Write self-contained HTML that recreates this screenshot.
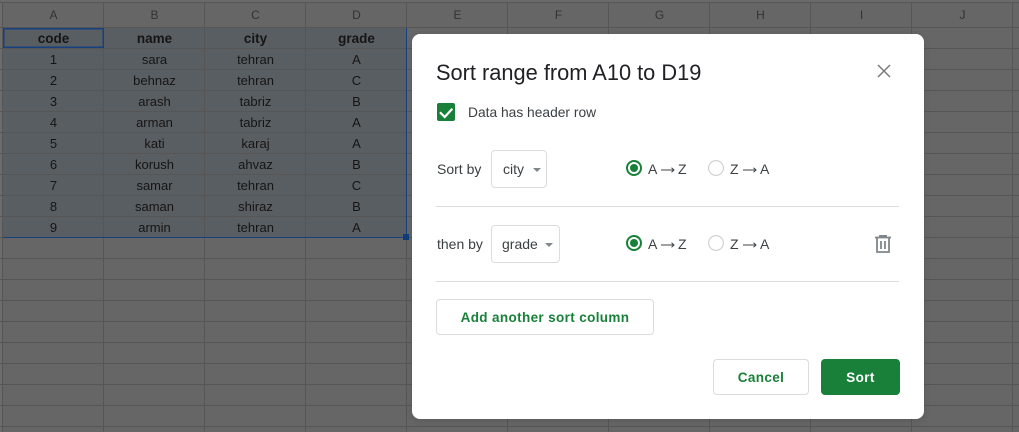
<!DOCTYPE html>
<html><head><meta charset="utf-8"><style>
html,body{margin:0;padding:0}
body{width:1019px;height:432px;overflow:hidden;position:relative;background:#666;font-family:"Liberation Sans",sans-serif}
.a{position:absolute}
.t{position:absolute;white-space:nowrap;line-height:20px}
.c{position:absolute;width:101px;text-align:center;font-size:13px;color:#151515;line-height:21px;height:21px;white-space:nowrap}
.h{position:absolute;width:101px;text-align:center;font-size:12px;color:#333;line-height:24px;top:3px}
.b{font-weight:bold;font-size:13.5px}
.v{position:absolute;top:3px;bottom:0;width:1px;background:#565656}
.l{position:absolute;left:0;right:0;height:1px;background:#565656}
.btn{position:absolute;box-sizing:border-box;border:1px solid #dadce0;border-radius:4px;background:#fff}
.sel{color:#3c4043;font-size:14px}
.g{color:#188038;font-weight:bold;font-size:13.5px;text-align:center;letter-spacing:.36px}
.x{font-size:14px;color:#3c4043}
</style></head><body>
<div class="a" style="left:0;top:0;width:1019px;height:3px;background:#6a6a6a;border-bottom:1px solid #565656;box-sizing:content-box;height:2px"></div>
<div class="a" style="left:0;top:3px;width:2px;height:429px;background:#6c6c6c"></div>
<div class="a" style="left:3px;top:27px;width:403px;height:210px;background:#595e63"></div>

<div class="l" style="top:27px"></div><div class="l" style="top:48px"></div><div class="l" style="top:69px"></div><div class="l" style="top:90px"></div><div class="l" style="top:111px"></div><div class="l" style="top:132px"></div><div class="l" style="top:153px"></div><div class="l" style="top:174px"></div><div class="l" style="top:195px"></div><div class="l" style="top:216px"></div><div class="l" style="top:237px"></div><div class="l" style="top:258px"></div><div class="l" style="top:279px"></div><div class="l" style="top:300px"></div><div class="l" style="top:321px"></div><div class="l" style="top:342px"></div><div class="l" style="top:363px"></div><div class="l" style="top:384px"></div><div class="l" style="top:405px"></div><div class="l" style="top:426px"></div>
<div class="v" style="left:2px"></div><div class="v" style="left:103px"></div><div class="v" style="left:204px"></div><div class="v" style="left:305px"></div><div class="v" style="left:406px"></div><div class="v" style="left:507px"></div><div class="v" style="left:608px"></div><div class="v" style="left:709px"></div><div class="v" style="left:810px"></div><div class="v" style="left:911px"></div><div class="v" style="left:1012px"></div>

<div class="h" style="left:3px">A</div><div class="h" style="left:104px">B</div><div class="h" style="left:205px">C</div><div class="h" style="left:306px">D</div><div class="h" style="left:407px">E</div><div class="h" style="left:508px">F</div><div class="h" style="left:609px">G</div><div class="h" style="left:710px">H</div><div class="h" style="left:811px">I</div><div class="h" style="left:912px">J</div>

<div class="c b" style="left:3px;top:28px">code</div><div class="c b" style="left:104px;top:28px">name</div><div class="c b" style="left:205px;top:28px">city</div><div class="c b" style="left:306px;top:28px">grade</div>
<div class="c" style="left:3px;top:49px">1</div><div class="c" style="left:104px;top:49px">sara</div><div class="c" style="left:205px;top:49px">tehran</div><div class="c" style="left:306px;top:49px">A</div>
<div class="c" style="left:3px;top:70px">2</div><div class="c" style="left:104px;top:70px">behnaz</div><div class="c" style="left:205px;top:70px">tehran</div><div class="c" style="left:306px;top:70px">C</div>
<div class="c" style="left:3px;top:91px">3</div><div class="c" style="left:104px;top:91px">arash</div><div class="c" style="left:205px;top:91px">tabriz</div><div class="c" style="left:306px;top:91px">B</div>
<div class="c" style="left:3px;top:112px">4</div><div class="c" style="left:104px;top:112px">arman</div><div class="c" style="left:205px;top:112px">tabriz</div><div class="c" style="left:306px;top:112px">A</div>
<div class="c" style="left:3px;top:133px">5</div><div class="c" style="left:104px;top:133px">kati</div><div class="c" style="left:205px;top:133px">karaj</div><div class="c" style="left:306px;top:133px">A</div>
<div class="c" style="left:3px;top:154px">6</div><div class="c" style="left:104px;top:154px">korush</div><div class="c" style="left:205px;top:154px">ahvaz</div><div class="c" style="left:306px;top:154px">B</div>
<div class="c" style="left:3px;top:175px">7</div><div class="c" style="left:104px;top:175px">samar</div><div class="c" style="left:205px;top:175px">tehran</div><div class="c" style="left:306px;top:175px">C</div>
<div class="c" style="left:3px;top:196px">8</div><div class="c" style="left:104px;top:196px">saman</div><div class="c" style="left:205px;top:196px">shiraz</div><div class="c" style="left:306px;top:196px">B</div>
<div class="c" style="left:3px;top:217px">9</div><div class="c" style="left:104px;top:217px">armin</div><div class="c" style="left:205px;top:217px">tehran</div><div class="c" style="left:306px;top:217px">A</div>

<div class="a" style="left:3px;top:28px;width:101px;height:20px;box-sizing:border-box;border:1px solid #17407f;box-shadow:inset 0 0 0 .5px #17407f"></div>
<div class="a" style="left:406px;top:28px;width:1px;height:209px;background:#17407f"></div>
<div class="a" style="left:3px;top:237px;width:403px;height:1px;background:#17407f"></div>
<div class="a" style="left:403px;top:234px;width:6px;height:6px;background:#113b7a"></div>

<div class="a" style="left:412px;top:34px;width:512px;height:385px;background:#fff;border-radius:8px;box-shadow:0 2px 8px rgba(0,0,0,.12)"></div>
<div class="t" style="left:436px;top:60px;font-size:21.8px;line-height:26px;color:#202124">Sort range from A10 to D19</div>
<svg class="a" style="left:876px;top:63px" width="16" height="16" viewBox="0 0 16 16"><path d="M2 2L14 14M14 2L2 14" stroke="#777a7d" stroke-width="1.5" fill="none"/></svg>

<div class="a" style="left:437px;top:103px;width:18px;height:18px;background:#188038;border-radius:2px"></div>
<svg class="a" style="left:437px;top:103px" width="18" height="18" viewBox="0 0 18 18"><path d="M3 9.3L7.7 14L15.3 5.7" stroke="#fff" stroke-width="2.2" fill="none"/></svg>
<div class="t" style="left:468px;top:103px;font-size:13.8px;color:#3c4043">Data has header row</div>

<div class="t" style="left:437px;top:159px;font-size:14px;color:#3c4043">Sort by</div>
<div class="btn" style="left:491px;top:150px;width:56px;height:38px"></div>
<div class="t sel" style="left:503px;top:159px">city</div>
<div class="a" style="left:533px;top:168px;width:0;height:0;border-left:4px solid transparent;border-right:4px solid transparent;border-top:4px solid #80868b"></div>

<svg class="a" style="left:625px;top:159px" width="18" height="18" viewBox="0 0 18 18"><circle cx="9" cy="9" r="7" fill="none" stroke="#188038" stroke-width="2"/><circle cx="9" cy="9" r="4" fill="#188038"/></svg>
<div class="t x" style="left:648px;top:159px">A</div>
<svg class="a" style="left:661px;top:166px" width="14" height="8" viewBox="0 0 14 8"><path d="M0 4H13M10.5 1.8L13 4L10.5 6.2" stroke="#3c4043" stroke-width="1" fill="none"/></svg>
<div class="t x" style="left:678px;top:159px">Z</div>
<svg class="a" style="left:707px;top:159px" width="18" height="18" viewBox="0 0 18 18"><circle cx="9" cy="9" r="7.4" fill="none" stroke="#d0d2d5" stroke-width="1.2"/></svg>
<div class="t x" style="left:730px;top:159px">Z</div>
<svg class="a" style="left:743px;top:166px" width="14" height="8" viewBox="0 0 14 8"><path d="M0 4H13M10.5 1.8L13 4L10.5 6.2" stroke="#3c4043" stroke-width="1" fill="none"/></svg>
<div class="t x" style="left:760px;top:159px">A</div>

<div class="a" style="left:436px;top:206px;width:463px;height:1px;background:#dadce0"></div>

<div class="t" style="left:437px;top:234px;font-size:14px;color:#3c4043">then by</div>
<div class="btn" style="left:491px;top:225px;width:69px;height:38px"></div>
<div class="t sel" style="left:502px;top:234px">grade</div>
<div class="a" style="left:545px;top:243px;width:0;height:0;border-left:4px solid transparent;border-right:4px solid transparent;border-top:4px solid #80868b"></div>

<svg class="a" style="left:625px;top:234px" width="18" height="18" viewBox="0 0 18 18"><circle cx="9" cy="9" r="7" fill="none" stroke="#188038" stroke-width="2"/><circle cx="9" cy="9" r="4" fill="#188038"/></svg>
<div class="t x" style="left:648px;top:234px">A</div>
<svg class="a" style="left:661px;top:241px" width="14" height="8" viewBox="0 0 14 8"><path d="M0 4H13M10.5 1.8L13 4L10.5 6.2" stroke="#3c4043" stroke-width="1" fill="none"/></svg>
<div class="t x" style="left:678px;top:234px">Z</div>
<svg class="a" style="left:707px;top:234px" width="18" height="18" viewBox="0 0 18 18"><circle cx="9" cy="9" r="7.4" fill="none" stroke="#d0d2d5" stroke-width="1.2"/></svg>
<div class="t x" style="left:730px;top:234px">Z</div>
<svg class="a" style="left:743px;top:241px" width="14" height="8" viewBox="0 0 14 8"><path d="M0 4H13M10.5 1.8L13 4L10.5 6.2" stroke="#3c4043" stroke-width="1" fill="none"/></svg>
<div class="t x" style="left:760px;top:234px">A</div>
<svg class="a" style="left:875px;top:235px" width="16" height="18" viewBox="0 0 16 18"><path d="M0 2.5H16M5 2.5V.8H11V2.5M2 3V17H14V3M6 6V14M10 6V14" stroke="#80868b" stroke-width="1.8" fill="none"/></svg>

<div class="a" style="left:436px;top:281px;width:463px;height:1px;background:#dadce0"></div>

<div class="btn g" style="left:436px;top:299px;width:218px;height:36px;line-height:35px">Add another sort column</div>
<div class="btn g" style="left:713px;top:359px;width:96px;height:36px;line-height:35px">Cancel</div>
<div class="a g" style="left:821px;top:359px;width:79px;height:36px;line-height:37px;background:#188038;border-radius:4px;color:#fff">Sort</div>
</body></html>
